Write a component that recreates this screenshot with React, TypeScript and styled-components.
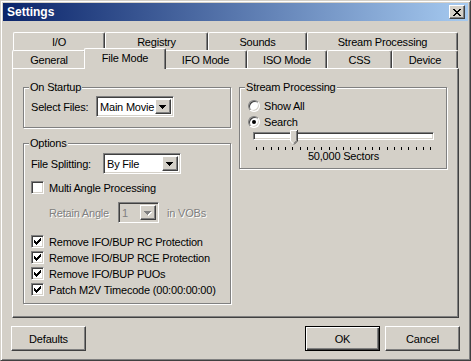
import styled, {createGlobalStyle, css} from 'styled-components';

const COLOR = {
  FACE: '#d4d0c8',
  LIGHT: '#ffffff',
  SHADOW: '#808080',
  DARK: '#404040',
  TEXT: '#000000',
};

const GlobalStyle = createGlobalStyle`
  * { box-sizing: border-box; }
  html, body { margin: 0; padding: 0; background: ${COLOR.FACE}; }
  body {
    font-family: 'Liberation Sans', Arial, sans-serif;
    font-size: 11px;
    letter-spacing: -0.2px;
    color: ${COLOR.TEXT};
  }
`;

const raised = css`
  border: 1px solid;
  border-color: ${COLOR.LIGHT} ${COLOR.DARK} ${COLOR.DARK} ${COLOR.LIGHT};
  box-shadow: inset -1px -1px 0 ${COLOR.SHADOW};
`;

const sunken = css`
  border: 1px solid;
  border-color: ${COLOR.SHADOW} ${COLOR.LIGHT} ${COLOR.LIGHT} ${COLOR.SHADOW};
  box-shadow: inset 1px 1px 0 ${COLOR.DARK}, inset -1px -1px 0 ${COLOR.FACE};
`;

const Window = styled.div`
  width: 471px;
  height: 361px;
  padding: 2px;
  display: flex;
  flex-direction: column;
  background: ${COLOR.FACE};
  border: 1px solid;
  border-color: ${COLOR.FACE} ${COLOR.DARK} ${COLOR.DARK} ${COLOR.FACE};
  box-shadow: inset 1px 1px 0 ${COLOR.LIGHT}, inset -1px -1px 0 ${COLOR.SHADOW};
`;

const TitleBar = styled.div`
  height: 18px;
  flex: none;
  display: flex;
  align-items: center;
  justify-content: space-between;
  padding: 0 3px 0 4px;
  background: linear-gradient(to right, #0a246a, #a6caf0);
`;

const TitleText = styled.div`
  color: #fff;
  font-weight: bold;
  font-size: 12px;
  letter-spacing: 0;
`;

const CloseButton = styled.div`
  width: 16px;
  height: 14px;
  display: flex;
  align-items: center;
  justify-content: center;
  background: ${COLOR.FACE};
  ${raised};
`;

const Body = styled.div`
  flex: 1;
  display: flex;
  flex-direction: column;
  padding: 11px 9px 0;
`;

const TabRow = styled.div<{$indent?: number}>`
  display: flex;
  height: 18px;
  padding-left: ${p => p.$indent ?? 0}px;
`;

const Tab = styled.div<{$w: number; $active?: boolean}>`
  flex: none;
  width: ${p => p.$w}px;
  height: 18px;
  display: flex;
  align-items: center;
  justify-content: center;
  padding-top: 1px;
  background: ${COLOR.FACE};
  border-top: 1px solid ${COLOR.LIGHT};
  border-left: 1px solid ${COLOR.LIGHT};
  border-right: 1px solid ${COLOR.DARK};
  border-radius: 2px 2px 0 0;
  box-shadow: inset -1px 0 0 ${COLOR.SHADOW};
  ${p =>
    p.$active &&
    css`
      position: relative;
      z-index: 2;
      width: ${p.$w + 4}px;
      height: 21px;
      margin: -2px -2px -1px;
      padding: 0 0 2px;
    `}
`;

const Panel = styled.div`
  height: 250px;
  display: flex;
  gap: 8px;
  padding: 18px 11px 0 10px;
  border: 1px solid;
  border-color: ${COLOR.LIGHT} ${COLOR.DARK} ${COLOR.DARK} ${COLOR.LIGHT};
  box-shadow: inset -1px -1px 0 ${COLOR.SHADOW};
`;

const Column = styled.div`
  width: 208px;
  display: flex;
  flex-direction: column;
  gap: 15px;
`;

const Group = styled.div<{$h: number; $pt: number; $pl: number}>`
  position: relative;
  height: ${p => p.$h}px;
  padding: ${p => p.$pt}px 0 0 ${p => p.$pl}px;
  border: 1px solid ${COLOR.SHADOW};
  box-shadow: inset 1px 1px 0 ${COLOR.LIGHT}, 1px 1px 0 ${COLOR.LIGHT};
`;

const Legend = styled.span`
  position: absolute;
  top: -7px;
  left: 5px;
  padding: 0 1px;
  line-height: 13px;
  background: ${COLOR.FACE};
`;

const FieldRow = styled.div`
  display: flex;
  align-items: center;
`;

const Label = styled.span<{$w?: number; $disabled?: boolean}>`
  flex: none;
  width: ${p => (p.$w ? `${p.$w}px` : 'auto')};
  white-space: nowrap;
  ${p =>
    p.$disabled &&
    css`
      color: ${COLOR.SHADOW};
      text-shadow: 1px 1px 0 ${COLOR.LIGHT};
    `}
`;

const Combo = styled.div<{$w: number; $disabled?: boolean}>`
  flex: none;
  width: ${p => p.$w}px;
  height: 21px;
  display: flex;
  align-items: stretch;
  padding: 2px;
  background: ${p => (p.$disabled ? COLOR.FACE : COLOR.LIGHT)};
  ${sunken};
`;

const ComboText = styled.span<{$disabled?: boolean}>`
  flex: 1;
  display: flex;
  align-items: center;
  padding-left: 1px;
  color: ${p => (p.$disabled ? COLOR.SHADOW : COLOR.TEXT)};
  white-space: nowrap;
  overflow: hidden;
`;

const ComboButton = styled.span`
  width: 16px;
  flex: none;
  display: flex;
  align-items: center;
  justify-content: center;
  padding-top: 1px;
  background: ${COLOR.FACE};
  ${raised};
`;

const CheckRow = styled.div<{$mt?: number}>`
  display: flex;
  align-items: center;
  gap: 5px;
  height: 13px;
  margin-top: ${p => p.$mt ?? 0}px;
`;

const CheckList = styled.div`
  display: flex;
  flex-direction: column;
  gap: 3px;
  margin-top: 12px;
`;

const CheckBox = styled.span`
  width: 13px;
  height: 13px;
  flex: none;
  display: flex;
  align-items: center;
  justify-content: center;
  background: ${COLOR.LIGHT};
  ${sunken};
`;

const RetainRow = styled.div`
  display: flex;
  align-items: center;
  gap: 8px;
  margin-top: 8px;
  padding-left: 18px;
`;

const RadioRow = styled.div`
  display: flex;
  align-items: center;
  gap: 4px;
  height: 12px;
  margin-bottom: 4px;
`;

const Radio = styled.span`
  width: 12px;
  height: 12px;
  flex: none;
  display: flex;
  align-items: center;
  justify-content: center;
  border-radius: 50%;
  background: ${COLOR.LIGHT};
  ${sunken};
`;

const RadioDot = styled.span`
  width: 4px;
  height: 4px;
  border-radius: 50%;
  background: ${COLOR.TEXT};
`;

const Slider = styled.div`
  width: 181px;
  margin: -2px 0 0 5px;
  display: flex;
  flex-direction: column;
`;

const SliderTrackArea = styled.div`
  position: relative;
  height: 15px;
  padding-top: 2px;
`;

const SliderTrack = styled.div`
  height: 8px;
  background: ${COLOR.LIGHT};
  ${sunken};
`;

const SliderThumb = styled.svg`
  position: absolute;
  top: 0;
  display: block;
`;

const Ticks = styled.svg`
  display: block;
  margin-top: 2px;
`;

const SliderLabel = styled.div`
  height: 13px;
  line-height: 13px;
  text-align: center;
`;

const Footer = styled.div`
  display: flex;
  justify-content: space-between;
  margin: 8px -1px 0;
`;

const ButtonGroup = styled.div`
  display: flex;
  gap: 5px;
`;

const Button = styled.button<{$default?: boolean}>`
  width: 75px;
  height: 25px;
  padding: 0;
  font-family: 'Liberation Sans', Arial, sans-serif;
  font-size: 11px;
  letter-spacing: -0.2px;
  color: ${COLOR.TEXT};
  background: ${COLOR.FACE};
  ${raised};
  ${p =>
    p.$default &&
    css`
      border: 1px solid #000;
      box-shadow:
        inset 1px 1px 0 ${COLOR.LIGHT},
        inset -1px -1px 0 ${COLOR.DARK},
        inset -2px -2px 0 ${COLOR.SHADOW};
    `}
`;

function Arrow({disabled}: {disabled?: boolean}) {
  const d = 'M0 0h7v1H0zM1 1h5v1H1zM2 2h3v1H2zM3 3h1v1H3z';
  return (
    <svg width="8" height="5" viewBox="0 0 8 5">
      {disabled && <path d={d} fill={COLOR.LIGHT} transform="translate(1 1)" />}
      <path d={d} fill={disabled ? COLOR.SHADOW : COLOR.TEXT} />
    </svg>
  );
}

function CheckMark() {
  return (
    <svg width="7" height="7" viewBox="0 0 7 7">
      <path
        fill={COLOR.TEXT}
        d="M6 0h1v1h-1zM5 1h2v1h-2zM0 2h1v1h-1zM4 2h3v1h-3zM0 3h2v1h-2zM3 3h3v1h-3zM0 4h5v1h-5zM1 5h3v1h-3zM2 6h1v1h-1z"
      />
    </svg>
  );
}

function CloseGlyph() {
  return (
    <svg width="8" height="7" viewBox="0 0 8 7">
      <path
        fill={COLOR.TEXT}
        d="M0 0h2v1h-2zM6 0h2v1h-2zM1 1h2v1h-2zM5 1h2v1h-2zM2 2h4v1h-4zM3 3h2v1h-2zM2 4h4v1h-4zM1 5h2v1h-2zM5 5h2v1h-2zM0 6h2v1h-2zM6 6h2v1h-2z"
      />
    </svg>
  );
}

function ComboBox({value, width, disabled}: {value: string; width: number; disabled?: boolean}) {
  return (
    <Combo $w={width} $disabled={disabled}>
      <ComboText $disabled={disabled}>{value}</ComboText>
      <ComboButton>
        <Arrow disabled={disabled} />
      </ComboButton>
    </Combo>
  );
}

function Check({label, checked, mt}: {label: string; checked?: boolean; mt?: number}) {
  return (
    <CheckRow $mt={mt}>
      <CheckBox>{checked && <CheckMark />}</CheckBox>
      <Label>{label}</Label>
    </CheckRow>
  );
}

const topTabs = [
  {label: 'I/O', w: 92},
  {label: 'Registry', w: 103},
  {label: 'Sounds', w: 99},
  {label: 'Stream Processing', w: 151},
];

const frontTabs = [
  {label: 'General', w: 74},
  {label: 'File Mode', w: 78, active: true},
  {label: 'IFO Mode', w: 83},
  {label: 'ISO Mode', w: 80},
  {label: 'CSS', w: 65},
  {label: 'Device', w: 66},
];

const protections = [
  'Remove IFO/BUP RC Protection',
  'Remove IFO/BUP RCE Protection',
  'Remove IFO/BUP PUOs',
  'Patch M2V Timecode (00:00:00:00)',
];

const TICK_COUNT = 25;
const THUMB_X = 37;

function App() {
  return (
    <>
      <GlobalStyle />
      <Window>
        <TitleBar>
          <TitleText>Settings</TitleText>
          <CloseButton>
            <CloseGlyph />
          </CloseButton>
        </TitleBar>
        <Body>
          <TabRow $indent={1}>
            {topTabs.map(t => (
              <Tab key={t.label} $w={t.w}>
                {t.label}
              </Tab>
            ))}
          </TabRow>
          <TabRow>
            {frontTabs.map(t => (
              <Tab key={t.label} $w={t.w} $active={t.active}>
                {t.label}
              </Tab>
            ))}
          </TabRow>
          <Panel>
            <Column>
              <Group $h={41} $pt={8} $pl={7}>
                <Legend>On Startup</Legend>
                <FieldRow>
                  <Label $w={65}>Select Files:</Label>
                  <ComboBox value="Main Movie" width={78} />
                </FieldRow>
              </Group>
              <Group $h={161} $pt={9} $pl={7}>
                <Legend>Options</Legend>
                <FieldRow>
                  <Label $w={72}>File Splitting:</Label>
                  <ComboBox value="By File" width={78} />
                </FieldRow>
                <Check label="Multi Angle Processing" mt={7} />
                <RetainRow>
                  <Label $w={61} $disabled>
                    Retain Angle
                  </Label>
                  <ComboBox value="1" width={41} disabled />
                  <Label $disabled>in VOBs</Label>
                </RetainRow>
                <CheckList>
                  {protections.map(p => (
                    <Check key={p} label={p} checked />
                  ))}
                </CheckList>
              </Group>
            </Column>
            <Column>
              <Group $h={82} $pt={12} $pl={8}>
                <Legend>Stream Processing</Legend>
                <RadioRow>
                  <Radio />
                  <Label>Show All</Label>
                </RadioRow>
                <RadioRow>
                  <Radio>
                    <RadioDot />
                  </Radio>
                  <Label>Search</Label>
                </RadioRow>
                <Slider>
                  <SliderTrackArea>
                    <SliderTrack />
                    <SliderThumb
                      width="8"
                      height="15"
                      viewBox="0 0 8 15"
                      style={{left: THUMB_X}}>
                      <path d="M0 0H7V11L3.5 14.5L0 11Z" fill={COLOR.FACE} />
                      <path d="M0.5 11V0.5H7" stroke={COLOR.LIGHT} fill="none" />
                      <path d="M7.5 0V11L4 14.5" stroke={COLOR.DARK} fill="none" />
                      <path d="M6.5 1V10.7L3.5 13.7" stroke={COLOR.SHADOW} fill="none" />
                      <path d="M0.5 11L3.5 14" stroke={COLOR.LIGHT} fill="none" />
                    </SliderThumb>
                  </SliderTrackArea>
                  <Ticks width="181" height="3" viewBox="0 0 181 3">
                    {Array.from({length: TICK_COUNT}).map((_, i) => (
                      <rect
                        key={i}
                        x={Math.round(3 + i * 7.25)}
                        y={0}
                        width={1}
                        height={3}
                        fill={COLOR.TEXT}
                      />
                    ))}
                  </Ticks>
                  <SliderLabel>50,000 Sectors</SliderLabel>
                </Slider>
              </Group>
            </Column>
          </Panel>
          <Footer>
            <Button>Defaults</Button>
            <ButtonGroup>
              <Button $default>OK</Button>
              <Button>Cancel</Button>
            </ButtonGroup>
          </Footer>
        </Body>
      </Window>
    </>
  );
}

export default App;
